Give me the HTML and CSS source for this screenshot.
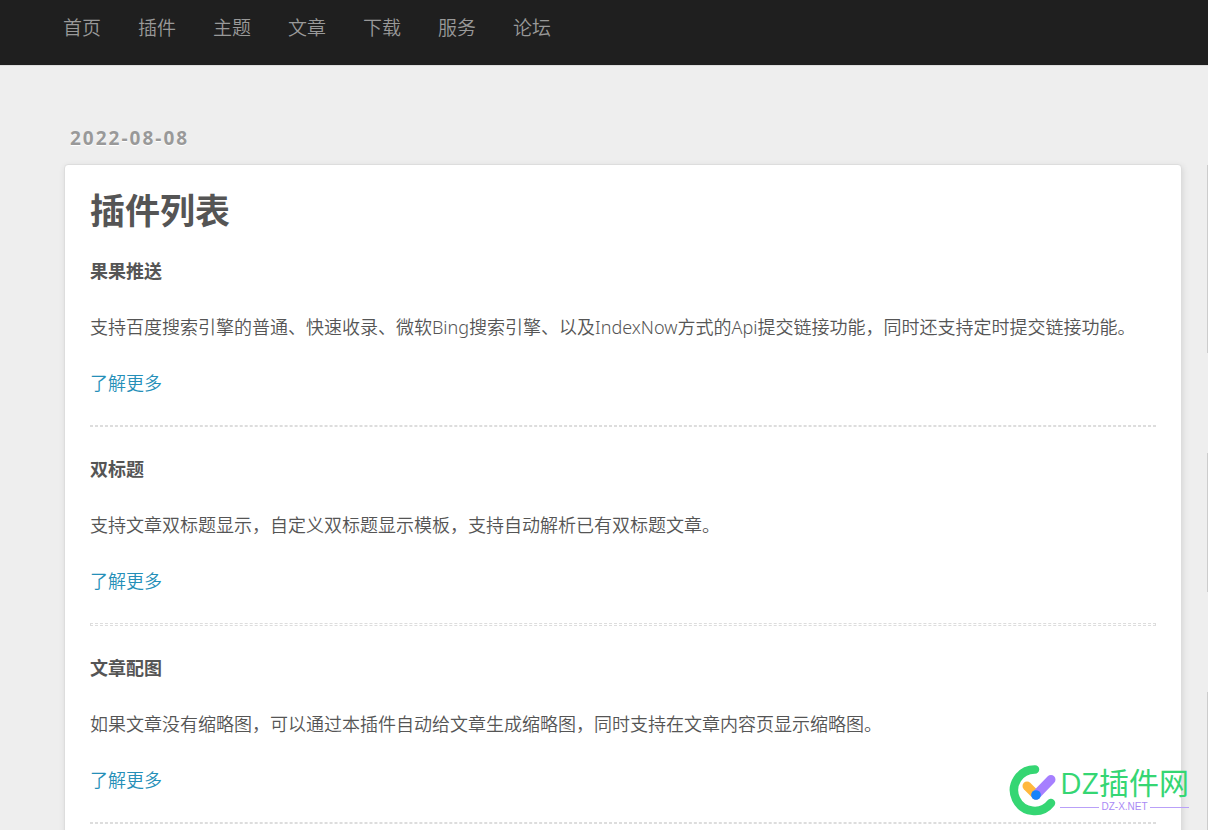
FILE: index.html
```html
<!DOCTYPE html>
<html lang="zh-CN">
<head>
<meta charset="utf-8">
<meta name="viewport" content="width=device-width, initial-scale=1">
<title>插件列表</title>
<link rel="stylesheet" href="styles.css">
</head>
<body>
<header class="topbar">
  <nav class="nav" aria-label="主导航">
    <a href="#">首页</a>
    <a href="#">插件</a>
    <a href="#">主题</a>
    <a href="#">文章</a>
    <a href="#">下载</a>
    <a href="#">服务</a>
    <a href="#">论坛</a>
  </nav>
</header>
<div class="layout">
  <main class="content">
    <time class="date" datetime="2022-08-08">2022-08-08</time>
    <article class="card">
      <h1 class="title">插件列表</h1>
      <section class="plugin">
        <h2>果果推送</h2>
        <p>支持百度搜索引擎的普通、快速收录、微软Bing搜索引擎、以及IndexNow方式的Api提交链接功能，同时还支持定时提交链接功能。</p>
        <a href="#">了解更多</a>
      </section>
      <hr class="rule">
      <section class="plugin">
        <h2>双标题</h2>
        <p>支持文章双标题显示，自定义双标题显示模板，支持自动解析已有双标题文章。</p>
        <a href="#">了解更多</a>
      </section>
      <hr class="rule rule-open">
      <section class="plugin">
        <h2>文章配图</h2>
        <p>如果文章没有缩略图，可以通过本插件自动给文章生成缩略图，同时支持在文章内容页显示缩略图。</p>
        <a href="#">了解更多</a>
      </section>
      <hr class="rule">
    </article>
  </main>
  <aside class="sidebar">
    <div class="widget widget-large"></div>
    <div class="widget"></div>
    <div class="widget"></div>
  </aside>
</div>
<div class="brand">
  <svg class="brand-mark" viewBox="0 0 52 52" fill="none" stroke-linecap="round" aria-hidden="true">
    <path d="M27 5.500A20.700 20.700 0 1 0 43 39" stroke="#35d673" stroke-width="8.500"/>
    <path d="M19 22L28 31" stroke="#ffb83d" stroke-width="9"/>
    <path d="M28 31L43 15.500" stroke="#a67fff" stroke-width="9"/>
    <circle cx="28" cy="31" r="4.800" fill="#1683fb"/>
  </svg>
  <div class="brand-text">
    <span class="brand-name">DZ插件网</span>
    <span class="brand-domain">DZ-X.NET</span>
  </div>
</div>
</body>
</html>
```
FILE: styles.css
```css
* {
  box-sizing: border-box;
}

body {
  position: relative;
  height: 100vh;
  margin: 0;
  overflow: hidden;
  background: #eee;
  color: #555;
  font: 350 18px/28px "Noto Sans", "Noto Sans CJK SC", sans-serif;
}

a {
  color: #258fb8;
  text-decoration: none;
}

.topbar {
  height: 66px;
  padding: 14px 63px;
  background: #1f1f1f;
  border-bottom: 1px solid #ddd;
}

.nav {
  display: flex;
  gap: 37px;
}

.nav a {
  color: #999;
  font-size: 19px;
}

.layout {
  display: grid;
  grid-template-columns: minmax(0, 1fr) 1px;
  column-gap: 25px;
  padding: 58px 0 0 64px;
}

.date {
  display: block;
  margin: 0 0 12px 6px;
  color: #999;
  font-family: "Open Sans", sans-serif;
  font-size: 19px;
  font-weight: 700;
  letter-spacing: 2px;
  text-shadow: 0 1px #fff;
}

.card {
  padding: 19px 25px;
  background: #fff;
  border: 1px solid #ddd;
  border-radius: 4px;
  box-shadow: 1px 2px 6px rgba(0, 0, 0, 0.1);
}

.title {
  margin: 0 0 19px;
  font-size: 35px;
  line-height: 54px;
}

.plugin {
  display: grid;
  row-gap: 28px;
  justify-items: start;
}

.plugin h2,
.plugin p {
  margin: 0;
  font-size: 18px;
}

.rule {
  height: 2px;
  margin: 28px 0;
  border: 1px dashed #ddd;
}

.rule-open {
  height: 3px;
}

.sidebar {
  display: grid;
  align-content: start;
  row-gap: 100px;
  padding-top: 41px;
}

.widget {
  height: 139px;
  background: #ccc;
}

.widget-large {
  height: 188px;
}

.brand {
  position: absolute;
  right: 19px;
  bottom: 14px;
  display: flex;
}

.brand-mark {
  width: 52px;
  height: 52px;
}

.brand-text {
  display: grid;
  align-content: start;
}

.brand-name {
  color: #35d673;
  font-family: "Open Sans", "Noto Sans CJK SC", sans-serif;
  font-size: 30px;
  font-weight: 400;
  line-height: 38px;
}

.brand-domain {
  display: flex;
  align-items: center;
  gap: 2px;
  color: #a98af5;
  font: 10px/10px "Liberation Sans", sans-serif;
}

.brand-domain::before,
.brand-domain::after {
  flex: 1;
  height: 1px;
  background: #b9a0f8;
  content: "";
}
```
